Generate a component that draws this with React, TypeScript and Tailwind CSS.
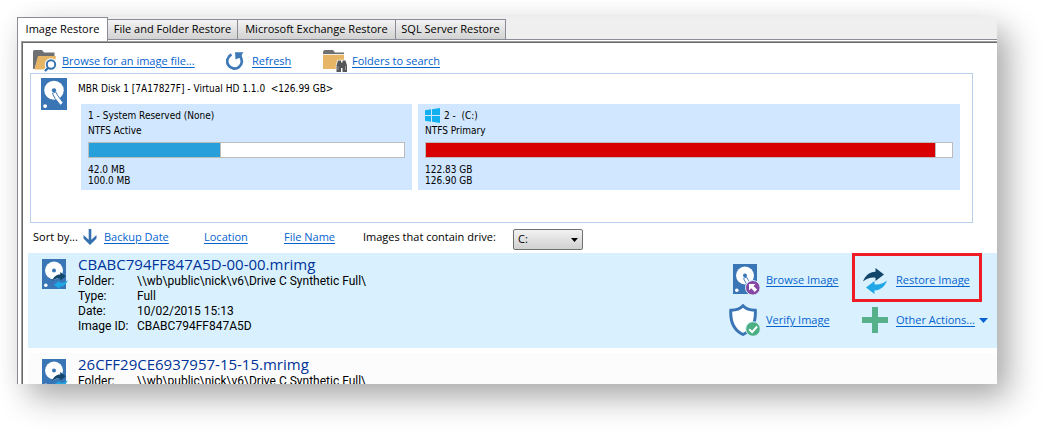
import React from "react";

const DiskShape = () => (
  <>
    <path d="M0 0h24v30H0z" fill="#3a76b5" />
    <circle cx="12" cy="11.5" r="9" fill="#fff" />
    <circle cx="12" cy="11.5" r="2" fill="#3a76b5" />
    <circle cx="3.8" cy="26.3" r="1.8" fill="#fff" />
  </>
);

const DiskArm = () => (
  <path
    d="M10.500 14.500l3-1.500 2 3.500 5 6.800-2.600 2.200-5-6.500z"
    fill="#fff"
    stroke="#3a76b5"
    strokeWidth=".9"
  />
);

const DiskIcon = () => (
  <svg viewBox="0 0 24 30" className="h-8 w-[26px] shrink-0" preserveAspectRatio="none" aria-hidden="true">
    <DiskShape />
    <DiskArm />
  </svg>
);

const RestoreArrows = () => (
  <>
    <path
      d="M0 13.500C2.500 7 7 3.500 12.500 3.700V0L21 6.500l-8.500 6.500V9.700C8 9 4 10.500 0 13.500z"
      fill="#12466b"
    />
    <path
      d="M24 12.500C21.500 19 17 22.500 11.500 22.300V26L3 19.500l8.500-6.500v3.300C16 17 20 15.500 24 12.500z"
      fill="#1fa7e6"
    />
  </>
);

const ImageDiskIcon = () => (
  <svg viewBox="0 0 26 30" className="h-[30px] w-[26px] shrink-0" aria-hidden="true">
    <DiskShape />
    <g transform="translate(10 13) scale(.66)">
      <RestoreArrows />
    </g>
  </svg>
);

const FolderShape = () => (
  <>
    <path d="M0 3q0-3 2-3h8l2 2.500h9V9H0z" fill="#6f7072" />
    <path d="M0 4.500h21V19H0z" fill="#e7b566" />
  </>
);

const FolderSearchIcon = () => (
  <svg viewBox="0 0 24 22" className="h-[22px] w-6 shrink-0" aria-hidden="true">
    <path d="M0 1.500Q0 0 1.500 0H9l2 2.500h10.500V8H5L1.500 19H0z" fill="#6f7072" />
    <path d="M5 6h18l-2.500 13.500H1.500z" fill="#e7b566" />
    <circle cx="18" cy="14.500" r="4.200" fill="#fff" stroke="#fff" strokeWidth="4" />
    <path d="M15.500 17.500L12 21" stroke="#fff" strokeWidth="4" />
    <path d="M15.500 17.500L12 21" stroke="#3470ad" strokeWidth="2.400" />
    <circle cx="18" cy="14.500" r="4.200" fill="#fff" stroke="#3470ad" strokeWidth="1.900" />
  </svg>
);

const FolderBinocularsIcon = () => (
  <svg viewBox="0 0 25 22" className="h-[22px] w-[25px] shrink-0" aria-hidden="true">
    <FolderShape />
    <path d="M0 4h21v1H0z" fill="#f3ead9" />
    <path
      d="M15 10.500h3v2h1.500v-2h3l1.500 5V22h-4.500v-4h-1.500v4h-4.500v-6.500z"
      fill="#555658"
      stroke="#fff"
      strokeWidth="1.400"
      paintOrder="stroke"
    />
    <path d="M15 16v4M22.500 16v4" stroke="#a5a6a8" strokeWidth=".8" />
  </svg>
);

const RefreshIcon = () => (
  <svg viewBox="0 0 18 19" className="h-[19px] w-[18px] shrink-0" aria-hidden="true">
    <path d="M5.500 2.600A7.300 7.300 0 1 0 13.800 4.200" fill="none" stroke="#3e79b6" strokeWidth="2.700" />
    <path d="M9 .2h8.400L15.800 2.800l.2 6-2.500-3L9.500 7.500z" fill="#3e79b6" />
  </svg>
);

const WindowsIcon = () => (
  <svg viewBox="0 0 15 15" className="h-[15px] w-[15px] shrink-0" aria-hidden="true">
    <path d="M0 2.200L6 1.300V7H0zM7 1.200L15 0v7H7zM0 8h6v5.700l-6-.9zM7 8h8v7l-8-1.200z" fill="#12b0ee" />
  </svg>
);

const SortArrowIcon = () => (
  <svg viewBox="0 0 14 16" className="h-4 w-3.5 shrink-0" aria-hidden="true">
    <path d="M5.700 0h2.600v10.800L13.500 6v3.600L7 16 .5 9.600V6l5.200 4.800z" fill="#3470ad" />
  </svg>
);

const BrowseIcon = () => (
  <svg viewBox="0 0 33 33" className="h-[33px] w-[33px]" aria-hidden="true">
    <g transform="translate(4 0)">
      <DiskShape />
      <DiskArm />
    </g>
    <circle cx="23.800" cy="23.800" r="7.300" fill="#8646a3" stroke="#d9f1ff" strokeWidth="1" />
    <path d="M20 20h6.500l-2 2 3.600 3.600-2.300 2.300-3.600-3.600-2.200 2.200z" fill="#fff" />
  </svg>
);

const VerifyIcon = () => (
  <svg viewBox="0 0 33 33" className="h-[33px] w-[33px]" aria-hidden="true">
    <path
      d="M14 1.800C11 5 6.500 6.300 1.800 6.200 1.200 17 4.500 26 14 30.500 23.500 26 27 17 26.300 6.200 21.500 6.300 17 5 14 1.800z"
      fill="#fff"
      stroke="#3a76b5"
      strokeWidth="3"
    />
    <circle cx="24" cy="25" r="7.300" fill="#4cae83" stroke="#d9f1ff" strokeWidth="1" />
    <path d="M20.200 25.200l2.900 2.900 5-5.600" fill="none" stroke="#fff" strokeWidth="2" />
  </svg>
);

const RestoreIcon = () => (
  <svg viewBox="0 0 24 26" className="h-[26px] w-6" aria-hidden="true">
    <RestoreArrows />
  </svg>
);

const PlusIcon = () => (
  <svg viewBox="0 0 26 26" className="h-[26px] w-[26px]" aria-hidden="true">
    <path d="M10 0h6v10h10v6H16v10h-6V16H0v-6h10z" fill="#56b08a" />
  </svg>
);

const linkClass = "whitespace-nowrap text-[#0563cf] underline underline-offset-2";

const tabs = [
  { name: "File and Folder Restore", width: "w-[130px]" },
  { name: "Microsoft Exchange Restore", width: "w-[158px]" },
  { name: "SQL Server Restore", width: "w-[110px]" },
];

function Tabs() {
  return (
    <div role="tablist" className="flex h-6 items-start bg-[#efefef]">
      <button
        role="tab"
        aria-selected="true"
        className="relative z-10 h-6 w-[91px] whitespace-nowrap border border-b-0 border-[#898c95] bg-white"
      >
        Image Restore
      </button>
      <div className="mt-0.5 flex h-[21px] flex-1 border-b border-[#898c95] shadow-[0_1px_0_#fff]">
        {tabs.map((tab) => (
          <button
            key={tab.name}
            role="tab"
            aria-selected="false"
            className={`${tab.width} whitespace-nowrap border border-l-0 border-b-0 border-[#898c95] bg-linear-to-b from-[#f3f3f3] to-[#d2d2d2]`}
          >
            {tab.name}
          </button>
        ))}
      </div>
    </div>
  );
}

type PartitionProps = {
  title: React.ReactNode;
  kind: string;
  used: string;
  size: string;
  percent: number;
  fill: string;
};

function Partition({ title, kind, used, size, percent, fill }: PartitionProps) {
  return (
    <div className="h-[86px] min-w-0 bg-[#d1e7ff] px-[7px] pt-1">
      <div className="flex h-[15px] items-center gap-1">{title}</div>
      <div className="h-[15px] leading-[15px]">{kind}</div>
      <div className="mt-1 h-4 border border-[#bcbcbc] bg-white">
        <div className={`${fill} h-full border-r border-[#bcbcbc]`} style={{ width: `${percent}%` }} />
      </div>
      <div className="mt-1.5 leading-[11px]">
        {used}
        <br />
        {size}
      </div>
    </div>
  );
}

function ImageEntry({
  name,
  details,
  selected,
}: {
  name: string;
  details: [string, string][];
  selected?: boolean;
}) {
  return (
    <article
      className={`flex h-[95px] shrink-0 justify-between pl-3.5 ${selected ? "bg-[#d9f1ff]" : "bg-[#fcfcfc]"}`}
    >
      <div className="flex gap-2.5 pt-1.5">
        <ImageDiskIcon />
        <div className="-mt-1">
          <h2 className="text-[15px] leading-[19px] whitespace-nowrap text-[#003399]">{name}</h2>
          <dl className="grid grid-cols-[59px_auto] font-[Roboto,sans-serif] text-[12px] leading-[15px]">
            {details.map(([label, value]) => (
              <React.Fragment key={label}>
                <dt className="whitespace-nowrap">{label}</dt>
                <dd className="whitespace-nowrap">{value}</dd>
              </React.Fragment>
            ))}
          </dl>
        </div>
      </div>
      {selected && (
        <div className="grid grid-cols-[123px_145px] grid-rows-[49px_36px]">
          <a href="#browse" className={`flex items-center gap-1 pt-1.5 ${linkClass}`}>
            <BrowseIcon />
            Browse Image
          </a>
          <a
            href="#restore"
            className={`mr-[15px] flex items-center gap-[9px] border-3 border-[#ee1c25] pt-1.5 pl-2 ${linkClass}`}
          >
            <RestoreIcon />
            Restore Image
          </a>
          <a href="#verify" className={`flex items-center gap-1 ${linkClass}`}>
            <VerifyIcon />
            Verify Image
          </a>
          <button className={`flex items-center gap-2 pl-2.5 ${linkClass}`}>
            <PlusIcon />
            Other Actions...
            <svg viewBox="0 0 9 5" className="-ml-1 h-[5px] w-[9px]" aria-hidden="true">
              <path d="M0 0h9L4.500 5z" fill="#0563cf" />
            </svg>
          </button>
        </div>
      )}
    </article>
  );
}

export default function App() {
  return (
    <div className="flex h-screen overflow-hidden bg-white pt-[17px] pr-12 pb-12 pl-[17px] font-['Open_Sans',sans-serif] text-[11px] text-black">
      <main className="flex min-w-0 flex-1 flex-col bg-white shadow-[12px_14px_30px_rgba(0,0,0,0.32),0_0_24px_rgba(0,0,0,0.04)]">
        <Tabs />
        <div className="flex min-h-0 flex-1 flex-col overflow-hidden border-l border-[#898c95] pl-[3px]">
          <section className="flex min-h-0 flex-1 flex-col overflow-hidden border-t border-l border-[#a0a0a0] pt-px pl-1.5 shadow-[inset_1px_1px_0_#696969]">
            <nav className="grid h-[30px] shrink-0 grid-cols-[193px_97px_auto] items-center pt-1.5 pl-[5px]">
              <a href="#file" className={`flex items-center gap-[5px] ${linkClass}`}>
                <FolderSearchIcon />
                Browse for an image file...
              </a>
              <a href="#refresh" className={`flex items-center gap-2 ${linkClass}`}>
                <RefreshIcon />
                Refresh
              </a>
              <a href="#folders" className={`flex items-center gap-1 ${linkClass}`}>
                <FolderBinocularsIcon />
                Folders to search
              </a>
            </nav>

            <div className="mr-6 ml-0.5 h-[150px] shrink-0 border border-[#b8d0ea] pt-1 pr-3 pl-2.5 font-['DejaVu_Sans_Condensed','DejaVu_Sans',sans-serif] text-[10px]">
              <div className="flex">
                <DiskIcon />
                <div className="ml-[11px] h-[26px] pt-[3px] leading-[15px] whitespace-pre">
                  MBR Disk 1 [7A17827F] - Virtual HD 1.1.0  &lt;126.99 GB&gt;
                </div>
              </div>
              <div className="-mt-1.5 ml-10 grid grid-cols-[331fr_542fr] gap-1.5">
                <Partition
                  title="1 - System Reserved (None)"
                  kind="NTFS Active"
                  used="42.0 MB"
                  size="100.0 MB"
                  percent={42}
                  fill="bg-[#269fdb]"
                />
                <Partition
                  title={
                    <>
                      <WindowsIcon />
                      <span className="whitespace-pre">2 -  (C:)</span>
                    </>
                  }
                  kind="NTFS Primary"
                  used="122.83 GB"
                  size="126.90 GB"
                  percent={97}
                  fill="bg-[#d80000]"
                />
              </div>
            </div>

            <div className="flex h-7 shrink-0 items-center pl-[5px]">
              <span className="w-[50px] whitespace-nowrap">Sort by...</span>
              <SortArrowIcon />
              <a href="#date" className={`ml-[7px] w-[100px] ${linkClass}`}>Backup Date</a>
              <a href="#location" className={`w-20 ${linkClass}`}>Location</a>
              <a href="#name" className={`w-[79px] ${linkClass}`}>File Name</a>
              <label htmlFor="drive" className="w-[150px] whitespace-nowrap">
                Images that contain drive:
              </label>
              <div className="relative">
                <select
                  id="drive"
                  className="mt-1 block h-[21px] w-[70px] appearance-none rounded-[2px] border border-[#707070] bg-linear-to-b from-[#f2f2f2] to-[#d0d0d0] pl-1"
                >
                  <option>C:</option>
                </select>
                <svg
                  viewBox="0 0 7 4"
                  className="pointer-events-none absolute top-[13px] right-[5px] h-1 w-[7px]"
                  aria-hidden="true"
                >
                  <path d="M0 0h7L3.500 4z" fill="#000" />
                </svg>
              </div>
            </div>

            <div className="mt-0.5 flex min-h-0 flex-1 flex-col gap-[5px] overflow-hidden">
              <ImageEntry
                selected
                name="CBABC794FF847A5D-00-00.mrimg"
                details={[
                  ["Folder:", "\\\\wb\\public\\nick\\v6\\Drive C Synthetic Full\\"],
                  ["Type:", "Full"],
                  ["Date:", "10/02/2015 15:13"],
                  ["Image ID:", "CBABC794FF847A5D"],
                ]}
              />
              <ImageEntry
                name="26CFF29CE6937957-15-15.mrimg"
                details={[["Folder:", "\\\\wb\\public\\nick\\v6\\Drive C Synthetic Full\\"]]}
              />
            </div>
          </section>
        </div>
      </main>
    </div>
  );
}
